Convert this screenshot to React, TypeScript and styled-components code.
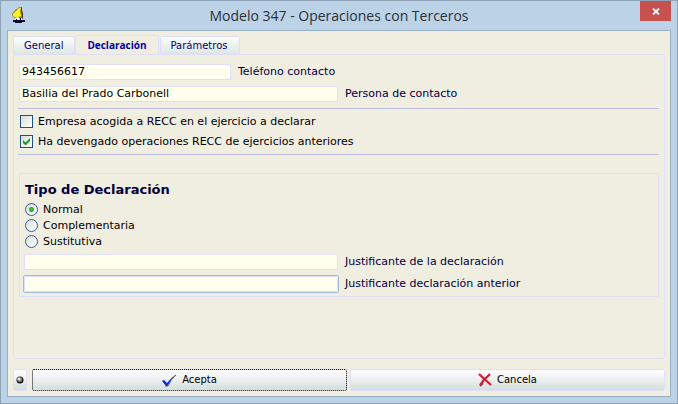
import React, { useState } from "react";
import styled, { createGlobalStyle } from "styled-components";

const GlobalStyle = createGlobalStyle`
  *, *::before, *::after { box-sizing: border-box; }
  body {
    margin: 0;
    background: #bbd2e7;
    color: #000;
    font: 11px/16px "DejaVu Sans", Verdana, sans-serif;
  }
  button, input { font: inherit; color: inherit; margin: 0; }
`;

const Window = styled.div`
  min-height: 100vh;
  display: flex;
  flex-direction: column;
  padding: 0 6px 6px;
  border: 1px solid #8ea3b6;
  background: #bbd2e7;
`;

const TitleBar = styled.header`
  display: grid;
  grid-template-columns: 48px 1fr 48px;
  height: 29px;
`;

const AppIcon = styled.svg`
  width: 16px;
  height: 18px;
  margin: 5px 0 0 4px;
`;

const Title = styled.h1`
  margin: 0;
  text-align: center;
  font: 14px/30px "Open Sans", "Noto Sans", sans-serif;
  color: #2c3136;
  white-space: nowrap;
`;

const CloseButton = styled.button`
  justify-self: end;
  display: grid;
  place-items: center;
  width: 31px;
  height: 20px;
  padding: 0;
  border: 0;
  background: #c75050;
`;

const Client = styled.main`
  flex: 1;
  display: flex;
  flex-direction: column;
  padding: 4px 5px 5px;
  border: 1px solid #98b0c5;
  background: #f0ede1;
`;

const TabList = styled.div`
  display: flex;
  align-items: flex-end;
  gap: 1px;
  height: 20px;
  margin-bottom: -1px;
`;

const Tab = styled.button<{ $active: boolean }>`
  height: ${(p) => (p.$active ? 20 : 18)}px;
  margin: ${(p) => (p.$active ? "0 0 0 -1px" : "0 0 1px")};
  padding: ${(p) => (p.$active ? "0 11px 2px" : "2px 11px 0 10px")};
  border: 1px solid #e0dffa;
  border-bottom: ${(p) => (p.$active ? "0" : "1px solid #e0dffa")};
  border-radius: 2px 2px 0 0;
  background: ${(p) => (p.$active ? "#f0ede1" : "linear-gradient(#fdfdfe, #dfe8e6)")};
  color: ${(p) => (p.$active ? "#0000a8" : "#000070")};
  font-size: 10px;
  line-height: 14px;
  font-family: ${(p) => (p.$active ? '"Open Sans", sans-serif' : '"DejaVu Sans", sans-serif')};
  font-weight: ${(p) => (p.$active ? 700 : 400)};
  white-space: nowrap;
`;

const Panel = styled.section`
  flex: 1;
  padding: 9px 5px 9px 4px;
  border: 1px solid #e0dffa;
  border-radius: 2px;
`;

const FieldRow = styled.div<{ $gap?: number }>`
  display: flex;
  align-items: center;
  gap: 7px;
  min-height: 16px;
  margin-bottom: ${(p) => p.$gap ?? 6}px;
`;

const TextInput = styled.input<{ $width: number }>`
  width: ${(p) => p.$width}px;
  height: 16px;
  padding: 0 2px;
  border: 1px solid #e0dffa;
  border-radius: 1px;
  outline: 0;
  background: #ffffee;
`;

const FocusFrame = styled.span`
  display: flex;
  margin: 0 -1px;
  border: 1px solid #a3bbdf;
  border-radius: 2px;
`;

const FieldLabel = styled.label`
  color: #00003c;
  white-space: nowrap;
`;

const Fields = styled.div`
  padding-left: 1px;
`;

const Checks = styled.div`
  display: flex;
  flex-direction: column;
  gap: 4px;
  padding: 5px 2px 4px;
  border: solid #c0bfe3;
  border-width: 1px 0;
`;

const Option = styled.label`
  display: flex;
  align-items: center;
  gap: 5px;
  white-space: nowrap;
`;

const Mark = styled.input`
  appearance: none;
  width: 13px;
  height: 13px;
  && { margin-bottom: 1px; }
  background: linear-gradient(135deg, #dcdcd7, #fff);
`;

const CheckBox = styled(Mark)`
  border: 1px solid #1f5180;
  &:checked {
    background:
      url("data:image/svg+xml,%3Csvg xmlns='http://www.w3.org/2000/svg' viewBox='0 0 11 11'%3E%3Cpath d='M2 4v3l2 2h1l4-4V2L5 6H4z' fill='%2321a121'/%3E%3C/svg%3E"),
      linear-gradient(135deg, #dcdcd7, #fff);
  }
`;

const Radio = styled(Mark)`
  border: 1px solid #30608c;
  border-radius: 50%;
  &:checked {
    background:
      radial-gradient(circle at center, #3fc43f 0 1px, #21a121 2px, transparent 3px),
      linear-gradient(135deg, #dcdcd7, #fff);
  }
`;

const Group = styled.fieldset`
  min-width: 0;
  margin: 18px 0 0 1px;
  padding: 6px 4px 3px;
  border: 1px solid #e0dffa;
  border-radius: 2px;
`;

const GroupTitle = styled.h2`
  margin: 0 0 3px 1px;
  color: #00003c;
  font-size: 13px;
  line-height: 19px;
`;

const Radios = styled.div`
  margin: 0 0 4px 1px;
`;

const Footer = styled.footer`
  display: flex;
  gap: 3px;
  margin-top: 10px;
`;

const PushButton = styled.button`
  flex: 1;
  display: flex;
  align-items: center;
  justify-content: center;
  gap: 5px;
  height: 22px;
  padding: 0;
  border: 1px solid #e0dffa;
  border-radius: 2px;
  background: linear-gradient(#ffffff, #f2f3f5 35%, #d4dfdd);
  font-size: 10px;
  svg { flex: none; }
`;

const AcceptButton = styled(PushButton)`
  border: 1px dotted #000;
`;

const InfoButton = styled(PushButton)`
  flex: 0 0 14px;
  margin-right: 2px;
`;

const Dot = styled.svg`
  width: 8px;
  height: 8px;
`;

const tabs = ["General", "Declaración", "Parámetros"];
const kinds = ["Normal", "Complementaria", "Sustitutiva"];

export default function App() {
  const [tab, setTab] = useState(1);
  return (
    <>
      <GlobalStyle />
      <Window>
        <TitleBar>
          <AppIcon viewBox="0 0 16 18" aria-hidden="true">
            <path d="M9 1h2v4l1 3v4l-2 1-3-2-4 1-2-3V8l3-4 3-2z" fill="#a08a18" />
            <path d="M8 2h2l-1 3 1 5-3 1-4 0-1-2V8l3-3z" fill="#fff024" />
            <path d="M10 1l1 1v3l1 3v4l-1 1 0-4-1-3z" fill="#3c3520" />
            <path d="M5 12l2-1 1 3H4zM9 12l2 1v1H9z" fill="#fff" />
            <path d="M2 14h3v-1h1v1h3v-2h1v2h4v2h-3v1H4v-1H2z" fill="#08082b" />
          </AppIcon>
          <Title>Modelo 347 - Operaciones con Terceros</Title>
          <CloseButton type="button" aria-label="Cerrar">
            <svg width="8" height="7" viewBox="0 0 8 7">
              <path d="M1 0.5l6 6M7 0.5l-6 6" stroke="#fff" strokeWidth="1.8" />
            </svg>
          </CloseButton>
        </TitleBar>
        <Client>
          <TabList role="tablist">
            {tabs.map((name, i) => (
              <Tab key={name} type="button" role="tab" aria-selected={tab === i} $active={tab === i} onClick={() => setTab(i)}>
                {name}
              </Tab>
            ))}
          </TabList>
          <Panel role="tabpanel">
            <Fields>
              <FieldRow>
                <TextInput id="phone" $width={212} defaultValue="943456617" />
                <FieldLabel htmlFor="phone">Teléfono contacto</FieldLabel>
              </FieldRow>
              <FieldRow>
                <TextInput id="person" $width={319} defaultValue="Basilia del Prado Carbonell" />
                <FieldLabel htmlFor="person">Persona de contacto</FieldLabel>
              </FieldRow>
            </Fields>
            <Checks>
              <Option>
                <CheckBox type="checkbox" />
                Empresa acogida a RECC en el ejercicio a declarar
              </Option>
              <Option>
                <CheckBox type="checkbox" defaultChecked />
                Ha devengado operaciones RECC de ejercicios anteriores
              </Option>
            </Checks>
            <Group aria-labelledby="kind-title">
              <GroupTitle id="kind-title">Tipo de Declaración</GroupTitle>
              <Radios>
                {kinds.map((kind, i) => (
                  <Option key={kind}>
                    <Radio type="radio" name="kind" defaultChecked={i === 0} />
                    {kind}
                  </Option>
                ))}
              </Radios>
              <FieldRow $gap={5}>
                <TextInput id="receipt" $width={314} />
                <FieldLabel htmlFor="receipt">Justificante de la declaración</FieldLabel>
              </FieldRow>
              <FieldRow $gap={0}>
                <FocusFrame>
                  <TextInput id="previous" $width={314} />
                </FocusFrame>
                <FieldLabel htmlFor="previous">Justificante declaración anterior</FieldLabel>
              </FieldRow>
            </Group>
          </Panel>
          <Footer>
            <InfoButton type="button" aria-label="Información">
              <Dot viewBox="0 0 8 8">
                <circle cx="4" cy="4" r="3.5" fill="#111" />
                <circle cx="3.7" cy="3.6" r="2.5" fill="#888" />
                <circle cx="3" cy="3" r="1.3" fill="#eee" />
              </Dot>
            </InfoButton>
            <AcceptButton type="button">
              <svg width="15" height="13" viewBox="0 0 15 13">
                <path d="M3 12h3Q8 6 14 1" fill="none" stroke="#6b6b4a" strokeWidth="1" />
                <path d="M0 7l2-1 3 3Q9 4 14 0 9 5 6 11l-1 1H4z" fill="#0a2be0" />
              </svg>
              Acepta
            </AcceptButton>
            <PushButton type="button">
              <svg width="14" height="14" viewBox="0 0 14 14">
                <path d="M2 13l3-3" stroke="#666" strokeWidth="2.4" />
                <path d="M1 1l12 11M12 1Q6 6 2 12" fill="none" stroke="#d81634" strokeWidth="2.2" />
              </svg>
              Cancela
            </PushButton>
          </Footer>
        </Client>
      </Window>
    </>
  );
}
